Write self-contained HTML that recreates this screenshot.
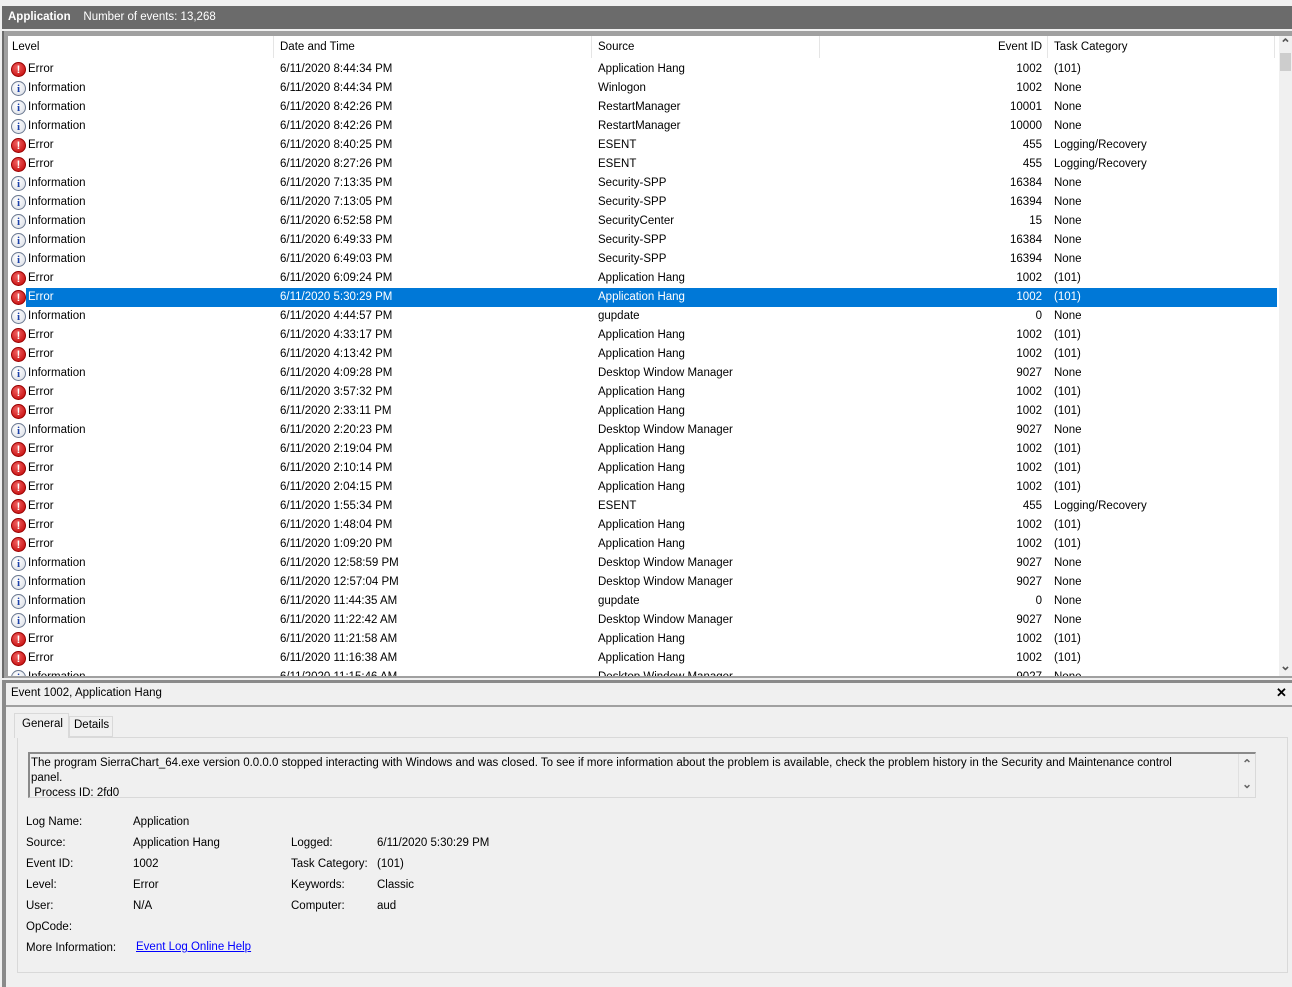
<!DOCTYPE html>
<html><head><meta charset="utf-8"><style>
*{margin:0;padding:0;box-sizing:border-box}
body{width:1292px;height:987px;background:#f0f0f0;font-family:"Liberation Sans",sans-serif;font-size:11.5px;color:#000;position:relative;overflow:hidden}
.a{position:absolute;white-space:nowrap}
.bar{left:2px;top:6px;width:1290px;height:23px;background:#6b6b6b;color:#fff;line-height:23px;padding-left:6px}
.frame{left:2px;top:31px;width:1290px;height:647px;background:#a0a0a0;border-left:2px solid #6b6b6b}
.list{left:8px;top:36px;width:1271px;height:640px;background:#fff;overflow:hidden}
.hdr{position:absolute;top:0;height:22px;line-height:22px}
.sep{position:absolute;top:0;width:1px;height:22px;background:#e5e5e5}
.row{position:absolute;left:0;width:1269px;height:19px;line-height:19px}
.row span{position:absolute;top:0}
.sel{background:#0078d7;color:#fff}
.ic{position:absolute;left:3px;top:2px;width:15px;height:15px;border-radius:50%;text-align:center;font-weight:bold;line-height:14px;font-size:11px}
.e{background:radial-gradient(circle at 40% 35%,#f06060,#c00000);color:#fff;border:1px solid #900}
.i{background:radial-gradient(circle at 40% 35%,#fff,#d8dce4);color:#1a3fa8;border:1px solid #6a7890;font-family:"Liberation Serif",serif}
.sb{left:1279px;top:36px;width:13px;height:640px;background:#f0f0f0}
.det{left:2px;top:680px;width:1290px;height:307px;background:#f0f0f0;border-left:4px solid #8a8a8a;border-top:3px solid #8a8a8a}
</style></head><body>
<div class="a bar"><b>Application</b>&nbsp;&nbsp;&nbsp;&nbsp;Number of events: 13,268</div>
<div class="a frame"></div>
<div class="a list">
<div class="hdr" style="left:4px">Level</div><div class="sep" style="left:265px"></div>
<div class="hdr" style="left:272px">Date and Time</div><div class="sep" style="left:583px"></div>
<div class="hdr" style="left:590px">Source</div><div class="sep" style="left:811px"></div>
<div class="hdr" style="left:990px">Event ID</div><div class="sep" style="left:1039px"></div>
<div class="hdr" style="left:1046px">Task Category</div><div class="sep" style="left:1266px"></div>
<div id="rows"></div>
</div>
<div class="a sb"><div style="position:absolute;left:1px;top:0px;font-size:13px;font-weight:bold;color:#555">&#8963;</div><div style="position:absolute;left:1px;top:17px;width:11px;height:18px;background:#cdcdcd"></div><div style="position:absolute;left:1px;top:622px;font-size:13px;font-weight:bold;color:#555">&#8964;</div></div>
<div class="a det"></div>
<div class="a" style="left:11px;top:687px">Event 1002, Application Hang</div>
<div class="a" style="left:1276px;top:685px;font-weight:bold;font-size:13px">&#10005;</div>
<div class="a" style="left:6px;top:705px;width:1286px;height:2px;background:#a0a0a0"></div>
<div class="a" style="left:17px;top:737px;width:1271px;height:236px;border:1px solid #d9d9d9;background:#f0f0f0"></div>
<div class="a" style="left:14px;top:713px;width:55px;height:25px;background:#f0f0f0;border:1px solid #d9d9d9;border-bottom:none;padding:4px 0 0 7px">General</div>
<div class="a" style="left:69px;top:716px;width:44px;height:21px;background:#f0f0f0;border:1px solid #d9d9d9;padding:2px 0 0 4px">Details</div>
<div class="a" style="left:28px;top:752px;width:1228px;height:46px;border:1px solid #d9d9d9;border-top:2px solid #8a8a8a;border-left:2px solid #8a8a8a;background:#f0f0f0"></div>
<div class="a" style="left:31px;top:756px;line-height:15px">The program SierraChart_64.exe version 0.0.0.0 stopped interacting with Windows and was closed. To see if more information about the problem is available, check the problem history in the Security and Maintenance control<br>panel.<br>&nbsp;Process ID: 2fd0</div>
<div class="a" style="left:1238px;top:754px;width:17px;height:43px;border-left:1px solid #e0e0e0;color:#666;font-size:12px;font-weight:bold;text-align:center;line-height:20px">&#8963;<br>&#8964;</div>
<div class="a" style="left:26px;top:812px;line-height:21px">Log Name:<br>Source:<br>Event ID:<br>Level:<br>User:<br>OpCode:<br>More Information:</div>
<div class="a" style="left:133px;top:812px;line-height:21px">Application<br>Application Hang<br>1002<br>Error<br>N/A</div>
<div class="a" style="left:136px;top:941px;color:#0000ff;text-decoration:underline">Event Log Online Help</div>
<div class="a" style="left:291px;top:833px;line-height:21px">Logged:<br>Task Category:<br>Keywords:<br>Computer:</div>
<div class="a" style="left:377px;top:833px;line-height:21px">6/11/2020 5:30:29 PM<br>(101)<br>Classic<br>aud</div>
<script>
var d=[["E","8:44:34 PM","Application Hang","1002","(101)"],["I","8:44:34 PM","Winlogon","1002","None"],["I","8:42:26 PM","RestartManager","10001","None"],["I","8:42:26 PM","RestartManager","10000","None"],["E","8:40:25 PM","ESENT","455","Logging/Recovery"],["E","8:27:26 PM","ESENT","455","Logging/Recovery"],["I","7:13:35 PM","Security-SPP","16384","None"],["I","7:13:05 PM","Security-SPP","16394","None"],["I","6:52:58 PM","SecurityCenter","15","None"],["I","6:49:33 PM","Security-SPP","16384","None"],["I","6:49:03 PM","Security-SPP","16394","None"],["E","6:09:24 PM","Application Hang","1002","(101)"],["E","5:30:29 PM","Application Hang","1002","(101)"],["I","4:44:57 PM","gupdate","0","None"],["E","4:33:17 PM","Application Hang","1002","(101)"],["E","4:13:42 PM","Application Hang","1002","(101)"],["I","4:09:28 PM","Desktop Window Manager","9027","None"],["E","3:57:32 PM","Application Hang","1002","(101)"],["E","2:33:11 PM","Application Hang","1002","(101)"],["I","2:20:23 PM","Desktop Window Manager","9027","None"],["E","2:19:04 PM","Application Hang","1002","(101)"],["E","2:10:14 PM","Application Hang","1002","(101)"],["E","2:04:15 PM","Application Hang","1002","(101)"],["E","1:55:34 PM","ESENT","455","Logging/Recovery"],["E","1:48:04 PM","Application Hang","1002","(101)"],["E","1:09:20 PM","Application Hang","1002","(101)"],["I","12:58:59 PM","Desktop Window Manager","9027","None"],["I","12:57:04 PM","Desktop Window Manager","9027","None"],["I","11:44:35 AM","gupdate","0","None"],["I","11:22:42 AM","Desktop Window Manager","9027","None"],["E","11:21:58 AM","Application Hang","1002","(101)"],["E","11:16:38 AM","Application Hang","1002","(101)"],["I","11:15:46 AM","Desktop Window Manager","9027","None"]];
var h="";d.forEach(function(r,k){var s=k==12;var c=s?';color:#fff':'';h+='<div class="row" style="top:'+(24+k*19)+'px">'+(s?'<div class="sel" style="position:absolute;left:18px;top:0;width:1251px;height:19px"></div>':'')+'<div class="ic '+(r[0]=="E"?"e":"i")+'">'+(r[0]=="E"?"!":"i")+'</div><span style="left:20px'+c+'">'+(r[0]=="E"?"Error":"Information")+'</span><span style="left:272px'+c+'">6/11/2020 '+r[1]+'</span><span style="left:590px'+c+'">'+r[2]+'</span><span style="right:235px'+c+'">'+r[3]+'</span><span style="left:1046px'+c+'">'+r[4]+'</span></div>';});
document.getElementById("rows").innerHTML=h;
</script>
</body></html>
